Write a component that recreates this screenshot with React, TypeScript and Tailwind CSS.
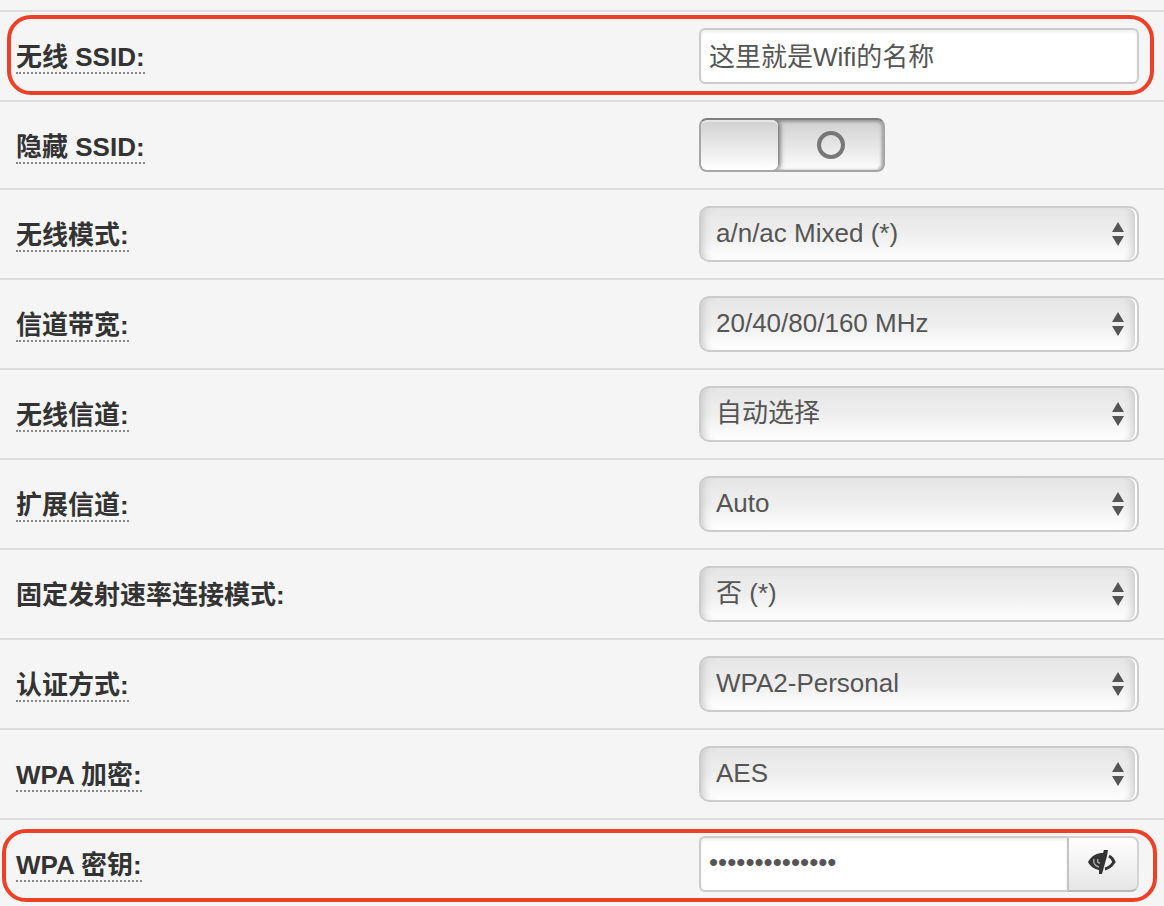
import React, { useState } from 'react';

type Field = {
  id: string;
  label: string;
  hint?: boolean;
  options: string[];
};

const selectFields: Field[] = [
  { id: 'mode', label: '无线模式:', hint: true, options: ['a/n/ac Mixed (*)'] },
  { id: 'bandwidth', label: '信道带宽:', hint: true, options: ['20/40/80/160 MHz'] },
  { id: 'channel', label: '无线信道:', hint: true, options: ['自动选择'] },
  { id: 'ext-channel', label: '扩展信道:', hint: true, options: ['Auto'] },
  { id: 'fixed-rate', label: '固定发射速率连接模式:', options: ['否 (*)'] },
  { id: 'auth', label: '认证方式:', hint: true, options: ['WPA2-Personal'] },
  { id: 'crypto', label: 'WPA 加密:', hint: true, options: ['AES'] },
];

type RowProps = {
  id: string;
  label: string;
  hint?: boolean;
  last?: boolean;
  children: React.ReactNode;
};

const Row: React.FC<RowProps> = ({ id, label, hint, last, children }) => (
  <div
    className={`relative flex items-start justify-between border-t-2 border-[#dddddd] pl-4 pr-[25px] pt-4 ${
      last ? 'pb-[14px]' : 'pb-4'
    }`}
  >
    <label
      htmlFor={id}
      className={`mt-[14px] border-b-2 border-dotted text-[26px] leading-[30px] font-bold text-[#333333] ${
        hint ? 'border-[#888888]' : 'border-transparent'
      }`}
    >
      {label}
    </label>
    {children}
  </div>
);

const SelectBox: React.FC<{ id: string; options: string[] }> = ({ id, options }) => (
  <div className="relative w-[440px]">
    <select
      id={id}
      className="block h-14 w-full appearance-none rounded-[10px] border-2 border-[#cccccc] bg-linear-to-b from-[#e6e6e6] via-[#eeeeee] to-white pr-10 pb-0.5 pl-[15px] text-[26px] text-[#555555] shadow-[inset_10px_0_8px_-8px_#c8c8c8,inset_-2px_0_0_#ffffff,inset_-12px_0_8px_-8px_#c8c8c8] outline-none"
    >
      {options.map((o) => (
        <option key={o}>{o}</option>
      ))}
    </select>
    <svg
      className="pointer-events-none absolute top-4 right-[15px] h-6 w-3"
      viewBox="0 0 12 24"
      fill="#555555"
      aria-hidden="true"
    >
      <path d="M6 0 L12 10 H0 Z M0 14 H12 L6 24 Z" />
    </svg>
  </div>
);

const Toggle: React.FC<{ id: string }> = ({ id }) => (
  <div className="w-[440px]">
    <div className="relative flex h-[54px] w-[186px] overflow-hidden rounded-lg border-2 border-[#a6a6a6] border-t-[#808080] bg-linear-to-b from-[#d0d0d0] to-[#fcfcfc] shadow-[inset_0_2px_3px_#999999,inset_-2px_0_3px_#bbbbbb]">
      <span className="w-[77px] rounded-md bg-linear-to-b from-[#d0d0d0] to-white shadow-[inset_0_2px_0_#e6e6e6,2px_0_5px_#666666]" />
      <span className="flex flex-1 items-center justify-center">
        <span className="h-7 w-7 rounded-full border-4 border-[#777777]" />
      </span>
      <input id={id} type="checkbox" className="absolute inset-0 h-full w-full cursor-pointer opacity-0" />
    </div>
  </div>
);

export default function App() {
  const [showKey, setShowKey] = useState(false);
  const [ssid, setSsid] = useState('这里就是Wifi的名称');
  const [wpaKey, setWpaKey] = useState('wireless123456');

  return (
    <form className="bg-[#f5f5f5] pt-[10px] font-['Liberation_Sans','Noto_Sans_CJK_SC',sans-serif]">
      <Row id="ssid" label="无线 SSID:" hint>
        <input
          id="ssid"
          type="text"
          value={ssid}
          onChange={(e) => setSsid(e.target.value)}
          className="h-14 w-[440px] rounded-md border-2 border-[#cccccc] bg-white px-2 pb-1 text-[26px] text-[#555555] shadow-[inset_0_2px_3px_#eeeeee] outline-none"
        />
        <span className="pointer-events-none absolute top-[3px] right-[10px] bottom-[5px] left-[7px] rounded-[24px] border-4 border-[#ee4027]" />
      </Row>

      <Row id="hide-ssid" label="隐藏 SSID:" hint>
        <Toggle id="hide-ssid" />
      </Row>

      {selectFields.map((f) => (
        <Row key={f.id} id={f.id} label={f.label} hint={f.hint}>
          <SelectBox id={f.id} options={f.options} />
        </Row>
      ))}

      <Row id="wpa-key" label="WPA 密钥:" hint last>
        <div className="flex w-[440px]">
          <input
            id="wpa-key"
            type={showKey ? 'text' : 'password'}
            value={wpaKey}
            onChange={(e) => setWpaKey(e.target.value)}
            className="h-14 min-w-0 flex-1 rounded-l-md border-2 border-r-0 border-[#cccccc] bg-white px-2 pb-1 text-[26px] text-[#555555] shadow-[inset_0_2px_3px_#eeeeee] outline-none"
          />
          <button
            type="button"
            aria-label="显示密钥"
            onClick={() => setShowKey(!showKey)}
            className="flex h-14 w-[72px] items-center justify-center rounded-r-lg border-2 border-[#d4d4d4] border-b-[#b8b8b8] border-l-[#c4c4c4] bg-linear-to-b from-white to-[#e6e6e6] pr-0.5 pb-1"
          >
            <svg className="h-6 w-7" viewBox="0 0 28 24" fill="none" aria-hidden="true">
              <path
                d="M0 12 C4 5 9 3 15 3 L16 0 L20 0 L19 6 L14 24 L11 24 L11 20 C6 19 2 16 0 12 Z"
                fill="#333333"
              />
              <path d="M6 9 C5 13 7 16 11 17 M10 9 C9 12 10 13 12 13" stroke="#aaaaaa" strokeWidth="1.5" />
              <path d="M21 6 C23 7 25 9 26 12 C24 15 21 18 17 19" stroke="#333333" strokeWidth="3" />
            </svg>
          </button>
        </div>
        <span className="pointer-events-none absolute top-[9px] right-[7px] bottom-1 left-[2px] rounded-[24px] border-4 border-[#ee4027]" />
      </Row>
    </form>
  );
}
